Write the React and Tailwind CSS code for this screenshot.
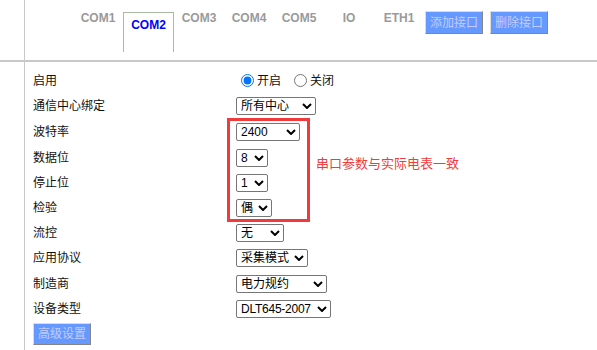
import React from "react";

const FONT = { fontFamily: '"Liberation Sans", "Noto Sans CJK SC", sans-serif' };

function Chevron() {
  return (
    <svg width="10" height="6" viewBox="0 0 10 6" className="shrink-0">
      <path d="M1 1 L5 5 L9 1" fill="none" stroke="#000" strokeWidth="2" />
    </svg>
  );
}

function Sel({ w, text, tight = false }) {
  return (
    <div
      className={`${w} h-[18px] border border-[#767676] rounded-[2px] flex items-center justify-between pl-[4px] pr-[3px] text-[12px] leading-[14px] text-black bg-white`}
    >
      <span className={`whitespace-nowrap ${tight ? "tracking-[-0.25px]" : ""}`}>{text}</span>
      <Chevron />
    </div>
  );
}

function Btn({ children, className = "" }) {
  return (
    <div
      className={`w-[58px] flex items-center justify-center bg-[#6699ff] text-[#c4ccff] text-[12px] border border-t-[#dcdcdc] border-l-[#dcdcdc] border-r-[#858585] border-b-[#858585] ${className}`}
    >
      {children}
    </div>
  );
}

function Row({ h, label, children }) {
  return (
    <div className={`flex items-center ${h}`}>
      <div className="w-[203px] text-[12px] leading-[14px] text-[#111]">{label}</div>
      <div className="flex items-center">{children}</div>
    </div>
  );
}

export default function App() {
  const tabs = ["COM3", "COM4", "COM5", "IO", "ETH1"];
  return (
    <div className="relative w-[597px] h-[350px] bg-white overflow-hidden" style={FONT}>
      {/* tab bar */}
      <div className="flex h-[60px]">
        <div className="w-[25px] shrink-0 border-r border-[#c8c8c8]" />
        <div className="flex items-start pl-[48px]">
          <div className="w-[50px] pt-[11px] text-center text-[12px] leading-[14px] font-bold text-[#9a9a9a]">COM1</div>
          <div className="w-[51px] mt-[12px] h-[40px] border border-b-0 border-[#a9bba1] pt-[5px] text-center text-[12px] leading-[14px] font-bold text-[#0000ff]">
            COM2
          </div>
          {tabs.map((t) => (
            <div key={t} className="w-[50px] pt-[11px] text-center text-[12px] leading-[14px] font-bold text-[#9a9a9a]">
              {t}
            </div>
          ))}
          <Btn className="mt-[11px] h-[23px] ml-[1px]">添加接口</Btn>
          <Btn className="mt-[11px] h-[23px] ml-[7px]">删除接口</Btn>
        </div>
      </div>
      <div className="h-[2px] bg-[#c8c8c8]" />
      {/* form */}
      <div className="flex h-[288px]">
        <div className="w-[25px] shrink-0 border-r border-[#c8c8c8]" />
        <div className="flex-1 pt-[6px] pl-[8px]">
          <Row h="h-[25px]" label="启用">
            <input type="radio" name="en" defaultChecked className="ml-[5px] mr-[3px] w-[13px] h-[13px]" />
            <span className="text-[12px] leading-[14px] text-[#111]">开启</span>
            <input type="radio" name="en" className="ml-[13px] mr-[3px] w-[13px] h-[13px]" />
            <span className="text-[12px] leading-[14px] text-[#111]">关闭</span>
          </Row>
          <Row h="h-[25px]" label="通信中心绑定">
            <Sel w="w-[80px]" text="所有中心" />
          </Row>
          <Row h="h-[27px]" label="波特率">
            <Sel w="w-[64px]" text="2400" />
          </Row>
          <Row h="h-[25px]" label="数据位">
            <Sel w="w-[32px]" text="8" />
          </Row>
          <Row h="h-[25px]" label="停止位">
            <Sel w="w-[32px]" text="1" />
          </Row>
          <Row h="h-[25px]" label="检验">
            <Sel w="w-[36px]" text="偶" />
          </Row>
          <Row h="h-[25px]" label="流控">
            <Sel w="w-[48px]" text="无" />
          </Row>
          <Row h="h-[26px]" label="应用协议">
            <Sel w="w-[72px]" text="采集模式" />
          </Row>
          <Row h="h-[25px]" label="制造商">
            <Sel w="w-[91px]" text="电力规约" />
          </Row>
          <Row h="h-[25px]" label="设备类型">
            <Sel w="w-[95px]" text="DLT645-2007" tight />
          </Row>
          <Btn className="mt-[2px] h-[22px]">高级设置</Btn>
        </div>
      </div>
      {/* annotation */}
      <div className="absolute left-[227px] top-[118px] w-[83px] h-[104px] border-[3px] border-[#ef3b3b]" />
      <div className="absolute left-[316px] top-[156px] text-[13px] leading-[16px] text-[#f03c3c] whitespace-nowrap">
        串口参数与实际电表一致
      </div>
    </div>
  );
}
